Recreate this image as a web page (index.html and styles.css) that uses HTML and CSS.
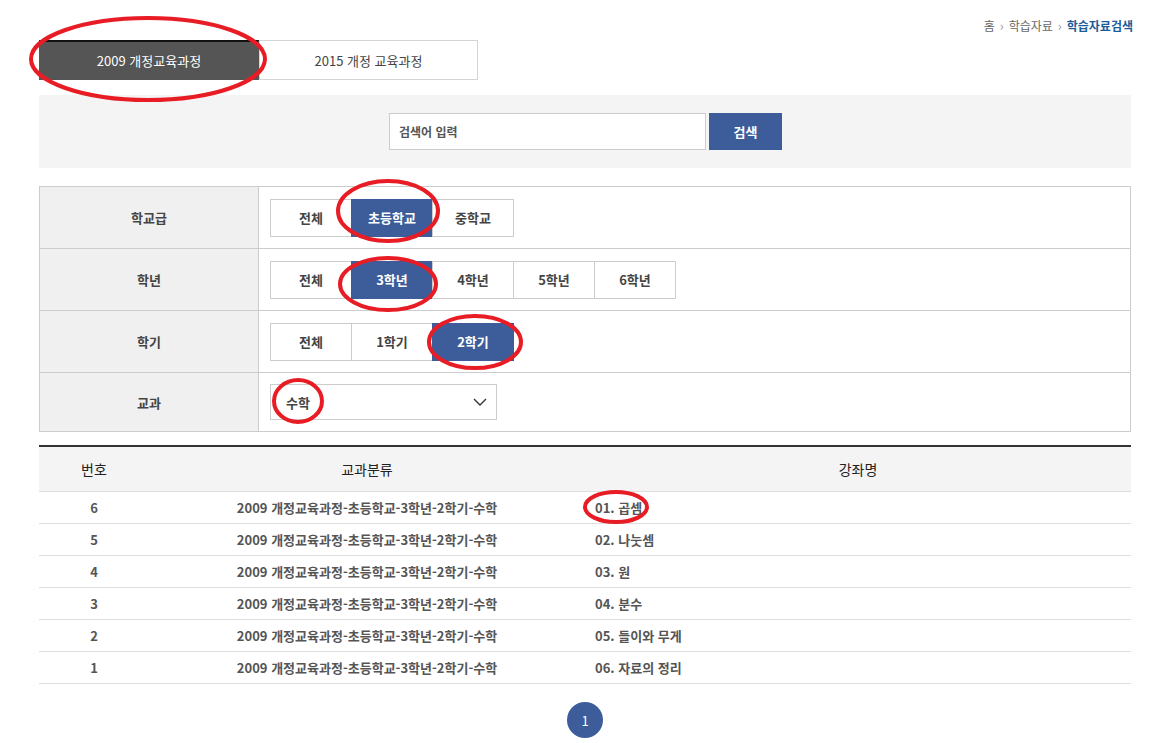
FILE: index.html
```html
<!DOCTYPE html>
<html lang="ko">

<head>
    <meta charset="UTF-8">
    <meta name="viewport" content="width=device-width, initial-scale=1.0">
    <title>학습자료검색</title>
    <link rel="stylesheet" href="styles.css">
</head>

<body>
    <div class="page">
        <div class="location">
            <span>홈</span>
            <span class="arrow">›</span>
            <span>학습자료</span>
            <span class="arrow">›</span>
            <span class="current">학습자료검색</span>
        </div>

        <div class="tabs">
            <button class="tab tab-on">2009 개정교육과정</button>
            <button class="tab">2015 개정 교육과정</button>
        </div>

        <div class="search-box">
            <input class="search-input" type="text" placeholder="검색어 입력">
            <button class="search-btn">검색</button>
        </div>

        <div class="filter">
            <div class="filter-row">
                <div class="filter-label">학교급</div>
                <div class="filter-opts">
                    <button class="opt">전체</button>
                    <button class="opt opt-on">초등학교</button>
                    <button class="opt">중학교</button>
                </div>
            </div>
            <div class="filter-row">
                <div class="filter-label">학년</div>
                <div class="filter-opts">
                    <button class="opt">전체</button>
                    <button class="opt opt-on">3학년</button>
                    <button class="opt">4학년</button>
                    <button class="opt">5학년</button>
                    <button class="opt">6학년</button>
                </div>
            </div>
            <div class="filter-row">
                <div class="filter-label">학기</div>
                <div class="filter-opts">
                    <button class="opt">전체</button>
                    <button class="opt">1학기</button>
                    <button class="opt opt-on">2학기</button>
                </div>
            </div>
            <div class="filter-row last-row">
                <div class="filter-label">교과</div>
                <div class="filter-opts">
                    <div class="select">
                        <span>수학</span>
                        <svg width="14" height="8" viewBox="0 0 14 8"><path d="M1 1l6 6 6-6" fill="none" stroke="#333" stroke-width="1.4"/></svg>
                    </div>
                </div>
            </div>
        </div>

        <table class="list">
            <thead>
                <tr>
                    <th class="col-no">번호</th>
                    <th class="col-cat">교과분류</th>
                    <th>강좌명</th>
                </tr>
            </thead>
            <tbody>
                <tr><td>6</td><td>2009 개정교육과정-초등학교-3학년-2학기-수학</td><td class="title">01. 곱셈</td></tr>
                <tr><td>5</td><td>2009 개정교육과정-초등학교-3학년-2학기-수학</td><td class="title">02. 나눗셈</td></tr>
                <tr><td>4</td><td>2009 개정교육과정-초등학교-3학년-2학기-수학</td><td class="title">03. 원</td></tr>
                <tr><td>3</td><td>2009 개정교육과정-초등학교-3학년-2학기-수학</td><td class="title">04. 분수</td></tr>
                <tr><td>2</td><td>2009 개정교육과정-초등학교-3학년-2학기-수학</td><td class="title">05. 들이와 무게</td></tr>
                <tr><td>1</td><td>2009 개정교육과정-초등학교-3학년-2학기-수학</td><td class="title">06. 자료의 정리</td></tr>
            </tbody>
        </table>

        <div class="paging">
            <span class="page-num">1</span>
        </div>
    </div>

    <!-- red annotation marks drawn over the capture -->
    <svg class="marks" width="1162" height="743" viewBox="0 0 1162 743">
        <g fill="none" stroke="#e81c24" stroke-width="4">
            <ellipse cx="148" cy="59" rx="117" ry="41"/>
            <ellipse cx="388" cy="211" rx="50" ry="30"/>
            <ellipse cx="388" cy="284" rx="48" ry="26"/>
            <ellipse cx="475" cy="342" rx="46" ry="26"/>
            <ellipse cx="298" cy="401" rx="24" ry="21"/>
            <ellipse cx="616" cy="507" rx="31" ry="15"/>
        </g>
    </svg>
</body>

</html>
```

FILE: styles.css
```css
body {
    margin: 0;
    font-family: "Noto Sans CJK KR", "Noto Sans", sans-serif;
    font-size: 13px;
    color: #333;
    background-color: #fff;
}

button {
    font-family: inherit;
}

.page {
    width: 1092px;
    margin-left: 39px;
    padding-top: 15px;
}

.location {
    display: flex;
    justify-content: flex-end;
    align-items: center;
    gap: 5px;
    height: 20px;
    font-size: 12px;
    color: #666;
    margin-right: -2px;
}

.location .arrow {
    color: #999;
    font-size: 13px;
}

.location .current {
    color: #1d5c9a;
    font-weight: bold;
}

.tabs {
    display: flex;
    margin-top: 5px;
}

.tab {
    width: 219px;
    height: 40px;
    border: 1px solid #d5d5d5;
    background-color: #fff;
    color: #444;
    font-size: 13px;
    padding: 0;
}

.tab-on {
    width: 220px;
    background-color: #555;
    border-color: #555;
    border-top: 2px solid #111;
    color: #fff;
}

.search-box {
    display: flex;
    justify-content: center;
    gap: 3px;
    margin-top: 15px;
    padding: 18px 0;
    background-color: #f4f4f4;
}

.search-input {
    width: 317px;
    height: 37px;
    box-sizing: border-box;
    border: 1px solid #ccc;
    padding: 0 9px;
    font-family: inherit;
    font-size: 12px;
    font-weight: bold;
    margin-left: 1px;
}

.search-input::placeholder {
    color: #555;
}

.search-btn {
    width: 73px;
    height: 37px;
    border: none;
    background-color: #3d5d9a;
    color: #fff;
    font-size: 13px;
    font-weight: bold;
}

.filter {
    margin-top: 18px;
    border: 1px solid #ccc;
}

.filter-row {
    display: flex;
    height: 61px;
    border-bottom: 1px solid #ccc;
}

.last-row {
    height: 58px;
    border-bottom: none;
}

.filter-label {
    width: 218px;
    display: flex;
    align-items: center;
    justify-content: center;
    background-color: #f0f0f0;
    border-right: 1px solid #ccc;
    font-weight: bold;
    color: #444;
}

.filter-opts {
    display: flex;
    align-items: center;
    padding-left: 11px;
}

.opt {
    width: 82px;
    height: 38px;
    border: 1px solid #ccc;
    margin-left: -1px;
    background-color: #fff;
    color: #444;
    font-size: 13px;
    font-weight: bold;
    padding: 0;
}

.opt:first-child {
    margin-left: 0;
}

.opt-on {
    background-color: #3d5d9a;
    border-color: #3d5d9a;
    color: #fff;
}

.select {
    width: 227px;
    height: 36px;
    box-sizing: border-box;
    border: 1px solid #ccc;
    display: flex;
    align-items: center;
    justify-content: space-between;
    padding: 0 9px 0 15px;
    font-weight: bold;
    color: #444;
}

.list {
    width: 100%;
    margin-top: 13px;
    border-collapse: collapse;
    border-top: 2px solid #333;
}

.list th {
    height: 44px;
    padding: 0;
    line-height: 1;
    background-color: #f4f4f4;
    font-weight: normal;
    font-size: 14px;
    color: #222;
    border-bottom: 1px solid #ddd;
}

.col-no {
    width: 110px;
}

.col-cat {
    width: 436px;
}

.list td {
    height: 31px;
    padding: 0;
    line-height: 1;
    text-align: center;
    border-bottom: 1px solid #ddd;
    font-weight: bold;
    color: #555;
    font-size: 13px;
}

.list td.title {
    text-align: left;
    padding-left: 10px;
}

.paging {
    display: flex;
    justify-content: center;
    margin-top: 18px;
}

.page-num {
    width: 36px;
    height: 36px;
    border-radius: 50%;
    background-color: #3d5d9a;
    color: #fff;
    display: flex;
    align-items: center;
    justify-content: center;
    font-size: 13px;
}

.marks {
    position: absolute;
    left: 0;
    top: 0;
    pointer-events: none;
}
```
